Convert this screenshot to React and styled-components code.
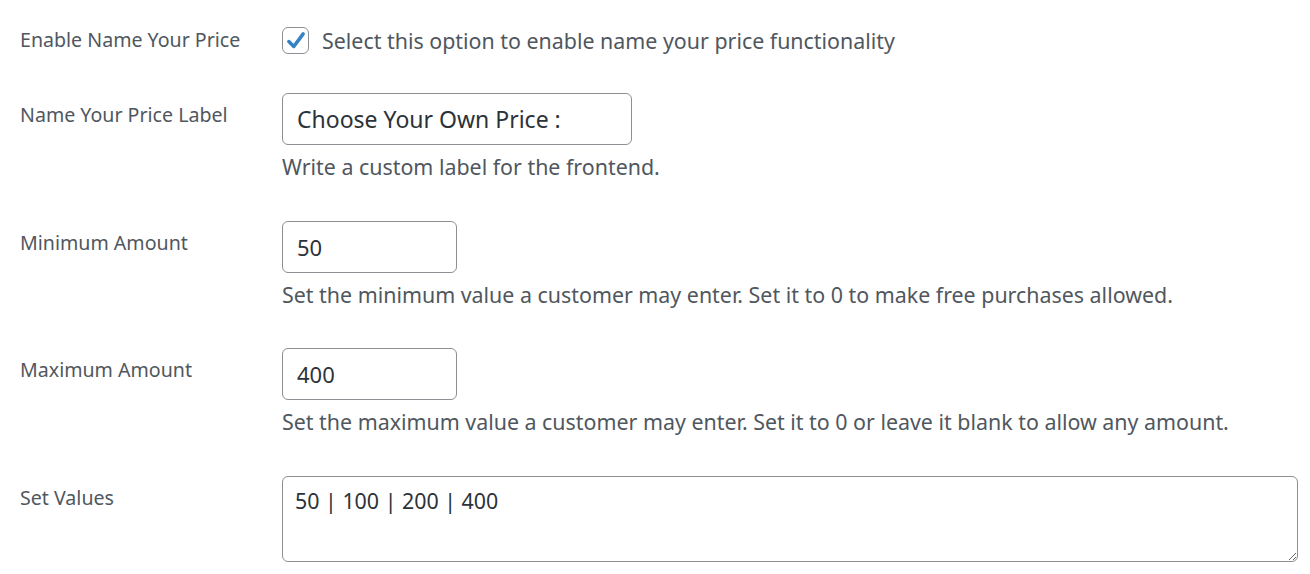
import React from "react";
import styled, { createGlobalStyle } from "styled-components";

const GlobalStyle = createGlobalStyle`
  html, body {
    margin: 0;
    padding: 0;
    background: #fff;
  }
  body {
    font-family: "Noto Sans", "Open Sans", "Liberation Sans", sans-serif;
  }
`;

const Form = styled.div`
  padding: 0 12px 0 20px;
  display: flex;
  flex-direction: column;
`;

const Row = styled.div`
  display: grid;
  grid-template-columns: 262px 1fr;
  padding: ${(p) => p.$pad || "21px 0 20.5px"};
`;

const Label = styled.div`
  font-size: 19.6px;
  line-height: 26px;
  color: #50575e;
  padding-top: ${(p) => p.$top || "9px"};
`;

const Field = styled.div`
  display: flex;
  flex-direction: column;
  align-items: flex-start;
`;

const CheckLine = styled.label`
  display: flex;
  align-items: center;
  gap: 13px;
  font-size: 21.4px;
  line-height: 26px;
  color: #50575e;
`;

const Box = styled.span`
  width: 25px;
  height: 25px;
  border: 1px solid #8c8f94;
  border-radius: 6px;
  display: flex;
  align-items: center;
  justify-content: center;
  background: #fff;
`;

const Input = styled.input`
  box-sizing: border-box;
  width: ${(p) => p.$w}px;
  height: 52px;
  border: 1px solid #8c8f94;
  border-radius: 6px;
  padding: 0 14px;
  font-family: inherit;
  font-size: ${(p) => p.$fs || "22px"};
  color: #2c3338;
  background: #fff;
  outline: none;
`;

const Area = styled.textarea`
  box-sizing: border-box;
  width: 100%;
  height: 86px;
  border: 1px solid #8c8f94;
  border-radius: 6px;
  padding: 8px 12px;
  font-family: inherit;
  font-size: 21.4px;
  line-height: 32px;
  color: #2c3338;
  background: #fff;
  outline: none;
  resize: vertical;
`;

const Desc = styled.p`
  margin: 9px 0 0;
  font-size: 21.4px;
  line-height: 25px;
  color: #50575e;
`;

const Check = () => (
  <svg width="22" height="22" viewBox="0 0 20 20">
    <path
      d="M3.5 10.5 L8 15 L16.5 3.5"
      fill="none"
      stroke="#3582c4"
      strokeWidth="3.2"
      strokeLinecap="round"
      strokeLinejoin="round"
    />
  </svg>
);

export default function App() {
  return (
    <>
      <GlobalStyle />
      <Form>
        <Row $pad="27px 0 18px">
          <Label $top="0">Enable Name Your Price</Label>
          <Field>
            <CheckLine>
              <Box>
                <Check />
              </Box>
              Select this option to enable name your price functionality
            </CheckLine>
          </Field>
        </Row>
        <Row>
          <Label>Name Your Price Label</Label>
          <Field>
            <Input $w={350} $fs="23px" defaultValue="Choose Your Own Price :" />
            <Desc>Write a custom label for the frontend.</Desc>
          </Field>
        </Row>
        <Row>
          <Label>Minimum Amount</Label>
          <Field>
            <Input $w={175} defaultValue="50" />
            <Desc>
              Set the minimum value a customer may enter. Set it to 0 to make free
              purchases allowed.
            </Desc>
          </Field>
        </Row>
        <Row>
          <Label>Maximum Amount</Label>
          <Field>
            <Input $w={175} defaultValue="400" />
            <Desc>
              Set the maximum value a customer may enter. Set it to 0 or leave it
              blank to allow any amount.
            </Desc>
          </Field>
        </Row>
        <Row>
          <Label>Set Values</Label>
          <Field>
            <Area defaultValue="50 | 100 | 200 | 400" />
          </Field>
        </Row>
      </Form>
    </>
  );
}
